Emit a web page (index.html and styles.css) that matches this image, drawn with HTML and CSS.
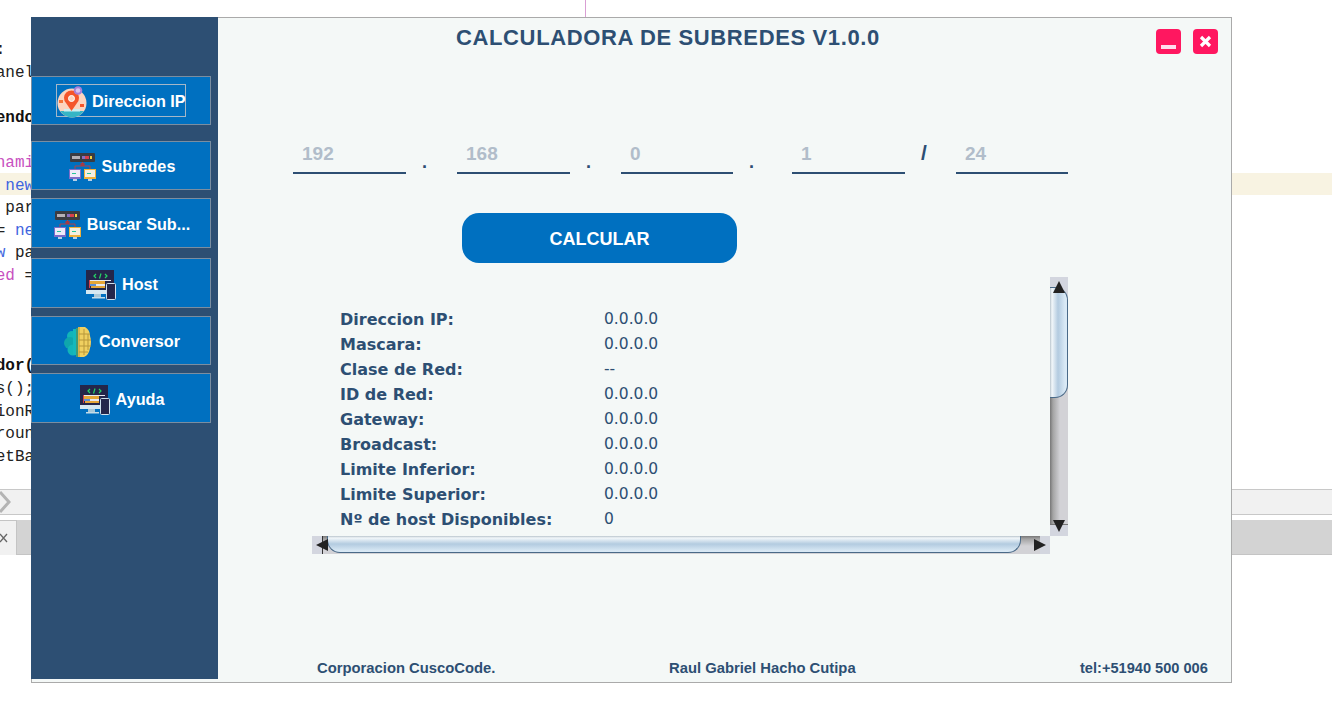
FILE: index.html
```html
<!DOCTYPE html>
<html lang="es">
<head>
    <meta charset="UTF-8">
    <title>Calculadora de Subredes</title>
    <link rel="stylesheet" href="styles.css">
</head>
<body>
    <!-- IDE visible detras de la ventana -->
    <div class="ide">
        <div class="code">
            <div class="line">:</div>
            <div class="line">anel</div>
            <div class="line"> </div>
            <div class="line bold">endo</div>
            <div class="line"> </div>
            <div class="line pink">nami</div>
            <div class="line current"> <span class="blue">new</span></div>
            <div class="line"> par</div>
            <div class="line">= <span class="blue">ne</span></div>
            <div class="line"><span class="blue">w</span> pa</div>
            <div class="line"><span class="pink">ed</span> =</div>
            <div class="line"> </div>
            <div class="line"> </div>
            <div class="line"> </div>
            <div class="line bold">dor(</div>
            <div class="line">s();</div>
            <div class="line">ionR</div>
            <div class="line">roun</div>
            <div class="line">etBa</div>
        </div>
        <div class="ide-toolbar">
            <svg class="chevron" width="12" height="22" viewBox="0 0 12 22"><path d="M1 1 L10 11 L1 21" fill="none" stroke="#b4b4b4" stroke-width="3"/></svg>
        </div>
        <div class="ide-tabs">
            <div class="ide-tab">
                <svg width="8" height="10" viewBox="0 0 8 10"><path d="M0 1 L7 9 M7 1 L0 9" stroke="#666" stroke-width="1.3"/></svg>
            </div>
        </div>
    </div>
    <div class="ide-guide"></div>

    <svg class="defs" width="0" height="0">
        <defs>
            <symbol id="icon-net" viewBox="0 0 27 28">
                <rect x="1" y="0" width="25" height="9" rx="1" fill="#3b3c42"/>
                <rect x="3" y="3" width="8" height="3" fill="#b5b0b5"/>
                <rect x="13" y="3" width="3" height="3" fill="#8a6fc0"/>
                <rect x="16" y="3" width="4" height="3" fill="#d8404a"/>
                <rect x="21" y="3" width="2" height="3" fill="#f0d040"/>
                <path d="M6 16 V13 H21 V16 M13.500 9 V13" fill="none" stroke="#b0404a" stroke-width="1"/>
                <rect x="11.500" y="10" width="4" height="3" fill="#a83a44"/>
                <rect x="0" y="16" width="12" height="10" fill="#7c6cc8"/>
                <rect x="1" y="17" width="10" height="7" fill="#eeeaf8"/>
                <rect x="3" y="20" width="4" height="1" fill="#27c59a"/>
                <rect x="4" y="26" width="4" height="2" fill="#b8d0e8"/>
                <rect x="15" y="16" width="12" height="10" fill="#efb13a"/>
                <rect x="16" y="17" width="10" height="7" fill="#f4efe0"/>
                <rect x="18" y="20" width="4" height="1" fill="#27c59a"/>
                <rect x="19" y="26" width="4" height="2" fill="#b8d0e8"/>
            </symbol>
            <symbol id="icon-host" viewBox="0 0 30 30">
                <rect x="0" y="0" width="28" height="20" fill="#24264a"/>
                <path d="M10 4 L8 6 L10 8 M19 4 L21 6 L19 8 M15 3.500 L13.500 8.500" fill="none" stroke="#25d366" stroke-width="1.200"/>
                <rect x="3" y="10" width="22" height="1" fill="#e8e8f0"/>
                <rect x="4" y="11" width="15" height="3" fill="#e6a637"/>
                <rect x="4" y="14" width="6" height="2" fill="#5c8fd8"/>
                <rect x="10" y="14" width="9" height="2" fill="#e8e8f0"/>
                <rect x="3" y="10" width="1" height="8" fill="#d8404a"/>
                <rect x="5" y="16" width="14" height="2" fill="#e6a637"/>
                <rect x="0" y="20" width="23" height="4" fill="#d4e8f2"/>
                <rect x="8" y="24" width="7" height="3" fill="#a9c8d8"/>
                <rect x="6" y="27" width="13" height="1.500" fill="#c4dce8"/>
                <rect x="20.500" y="13.500" width="9" height="16" rx="1" fill="#24264a" stroke="#cfe0ec"/>
            </symbol>
        </defs>
    </svg>

    <div class="window">
        <aside class="sidebar">
            <a class="nav-btn nav-first">
                <span class="nav-focus">
                    <svg class="nav-icon" width="30" height="32" viewBox="0 0 30 32">
                        <circle cx="15" cy="17" r="14.500" fill="#fcd4bf"/>
                        <path d="M3 25 H27 Q22 31.500 15 31.500 Q8 31.500 3 25 Z" fill="#35b5c5"/>
                        <path d="M7 23 H23 V25.500 H7 Z" fill="#cfeff0"/>
                        <path d="M14.500 25 L9 17 A7.500 7.500 0 1 1 20 17 Z" fill="#f4552a"/>
                        <circle cx="14.500" cy="12.500" r="3" fill="#fcd4bf" stroke="#fff" stroke-width="1"/>
                        <rect x="2" y="14" width="4" height="3" fill="#f4753a"/>
                        <rect x="23" y="18" width="4" height="3" fill="#f4552a"/>
                        <circle cx="21" cy="4.500" r="4.300" fill="#a87fd8"/>
                        <circle cx="21" cy="4.500" r="2.300" fill="#d8c4f0"/>
                    </svg>
                    Direccion IP
                </span>
            </a>
            <a class="nav-btn gap-16">
                <svg class="nav-icon" width="27" height="28"><use href="#icon-net"/></svg>
                Subredes
            </a>
            <a class="nav-btn gap-8 tall">
                <svg class="nav-icon" width="27" height="28"><use href="#icon-net"/></svg>
                Buscar Sub...
            </a>
            <a class="nav-btn gap-10 tall">
                <svg class="nav-icon" width="30" height="30"><use href="#icon-host"/></svg>
                Host
            </a>
            <a class="nav-btn gap-8">
                <svg class="nav-icon" width="29" height="32" viewBox="0 0 29 32">
                    <circle cx="8" cy="10" r="5" fill="#12b5b8"/>
                    <circle cx="6" cy="17" r="6" fill="#0fa6ac"/>
                    <circle cx="9" cy="24" r="5.500" fill="#12b5b8"/>
                    <rect x="9" y="3" width="6" height="26" fill="#14b8bc"/>
                    <path d="M14 1 H21 Q26 4 26 10 Q28 16 26 22 Q25 29 20 31 H14 Z" fill="#f0d060"/>
                    <path d="M15 1 V31 M20 3 V29 M24 8 V24 M15 8 H26 M15 14 H27 M15 20 H27 M15 26 H24" fill="none" stroke="#b8983a" stroke-width="1"/>
                    <rect x="12" y="2" width="2" height="29" fill="#3d9a78"/>
                </svg>
                Conversor
            </a>
            <a class="nav-btn gap-8 tall">
                <svg class="nav-icon" width="30" height="30"><use href="#icon-host"/></svg>
                Ayuda
            </a>
        </aside>

        <main class="main">
            <header class="header">
                <h1 class="title">CALCULADORA DE SUBREDES V1.0.0</h1>
                <div class="win-controls">
                    <button class="win-btn">
                        <svg width="25" height="25" viewBox="0 0 25 25"><rect x="5" y="16" width="15" height="4" fill="#fde"/></svg>
                    </button>
                    <button class="win-btn">
                        <svg width="25" height="25" viewBox="0 0 25 25"><path d="M8 8 L17 17 M17 8 L8 17" stroke="#fff" stroke-width="3.200"/></svg>
                    </button>
                </div>
            </header>

            <div class="ip-row">
                <div class="octet">192</div>
                <div class="sep">.</div>
                <div class="octet">168</div>
                <div class="sep">.</div>
                <div class="octet octet-short">0</div>
                <div class="sep sep-wide">.</div>
                <div class="octet">1</div>
                <div class="sep sep-slash">/</div>
                <div class="octet octet-short">24</div>
            </div>

            <button class="calc-btn">CALCULAR</button>

            <section class="pane">
                <div class="results">
                    <div class="result"><span class="label">Direccion IP:</span><span>0.0.0.0</span></div>
                    <div class="result"><span class="label">Mascara:</span><span>0.0.0.0</span></div>
                    <div class="result"><span class="label">Clase de Red:</span><span>--</span></div>
                    <div class="result"><span class="label">ID de Red:</span><span>0.0.0.0</span></div>
                    <div class="result"><span class="label">Gateway:</span><span>0.0.0.0</span></div>
                    <div class="result"><span class="label">Broadcast:</span><span>0.0.0.0</span></div>
                    <div class="result"><span class="label">Limite Inferior:</span><span>0.0.0.0</span></div>
                    <div class="result"><span class="label">Limite Superior:</span><span>0.0.0.0</span></div>
                    <div class="result"><span class="label">Nº de host Disponibles:</span><span>0</span></div>
                </div>
                <div class="vbar">
                    <div class="vbar-track"></div>
                    <div class="vbar-thumb"></div>
                    <svg class="arrow arrow-up" width="12" height="12" viewBox="0 0 12 12"><path d="M6 0 L12 12 H0 Z" fill="#222"/></svg>
                    <svg class="arrow arrow-down" width="12" height="12" viewBox="0 0 12 12"><path d="M6 12 L12 0 H0 Z" fill="#222"/></svg>
                </div>
                <div class="hbar">
                    <div class="hbar-track"></div>
                    <div class="hbar-thumb"></div>
                    <svg class="arrow arrow-left" width="12" height="12" viewBox="0 0 12 12"><path d="M0 6 L12 0 V12 Z" fill="#222"/></svg>
                    <svg class="arrow arrow-right" width="12" height="12" viewBox="0 0 12 12"><path d="M12 6 L0 0 V12 Z" fill="#222"/></svg>
                </div>
            </section>

            <footer class="footer">
                <span class="foot-company">Corporacion CuscoCode.</span>
                <span class="foot-author">Raul Gabriel Hacho Cutipa</span>
                <span class="foot-tel">tel:+51940 500 006</span>
            </footer>
        </main>
    </div>
</body>
</html>
```

FILE: styles.css
```css
* {
    box-sizing: border-box;
}

html, body {
    margin: 0;
    height: 702px;
    overflow: hidden;
    background: #fff;
}

body {
    position: relative;
    font-family: "Liberation Sans", Arial, sans-serif;
}

.defs {
    position: absolute;
}

/* IDE de fondo */
.code {
    padding-top: 37px;
    font: 16px/22.6px "Liberation Mono", monospace;
    color: #222;
}

.line {
    height: 22.6px;
    padding-top: 2px;
    white-space: pre;
    text-indent: -4.3px;
}

.line.current {
    background: #f8f3e2;
}

.bold {
    font-weight: bold;
    color: #111;
}

.pink {
    color: #c850c0;
}

.blue {
    color: #3f66e0;
}

.ide-toolbar {
    height: 26px;
    margin-top: 23px;
    background: #f1f1f1;
    border-top: 1px solid #c8c8c8;
    border-bottom: 1px solid #c8c8c8;
    display: flex;
    align-items: center;
}

.chevron {
    margin-left: -1px;
}

.ide-tabs {
    height: 35px;
    margin-top: 5px;
    background: #d3d3d3;
    border-bottom: 1px solid #c4c4c4;
}

.ide-tab {
    width: 17px;
    height: 35px;
    background: #f1f1f1;
    border-top: 1px solid #c4c4c4;
    border-right: 1px solid #c4c4c4;
    display: flex;
    align-items: center;
    justify-content: flex-start;
}

.ide-guide {
    position: absolute;
    left: 585px;
    top: 0;
    width: 1px;
    height: 17px;
    background: #d99fd4;
}

/* Ventana */
.window {
    position: absolute;
    left: 31px;
    top: 17px;
    width: 1201px;
    height: 666px;
    display: flex;
    align-items: flex-start;
    background: #f4f8f7;
    border: 1px solid #aaa;
}

.sidebar {
    width: 187px;
    height: 662px;
    margin: -1px 0 0 -1px;
    padding-top: 59px;
    background: #2d4f73;
    flex-shrink: 0;
}

.nav-btn {
    width: 180px;
    height: 49px;
    padding: 2px 0 0 2px;
    display: flex;
    align-items: center;
    justify-content: center;
    gap: 6px;
    background: #0070c0;
    border: 1px solid #7b8ea1;
    color: #fff;
    font-size: 16.2px;
    font-weight: bold;
    white-space: nowrap;
}

.nav-btn.tall {
    height: 50px;
    padding-top: 3px;
}

.nav-btn.nav-first {
    padding: 0;
}

.gap-8 {
    margin-top: 8px;
}

.gap-10 {
    margin-top: 10px;
}

.gap-16 {
    margin-top: 16px;
}

.nav-focus {
    width: 130px;
    height: 33px;
    padding-top: 2px;
    display: flex;
    align-items: center;
    gap: 5px;
    border: 1px solid #a5b7c8;
}

.nav-icon {
    flex-shrink: 0;
}

.main {
    flex: 1;
    height: 664px;
    display: flex;
    flex-direction: column;
    color: #2d4f73;
}

.header {
    height: 122px;
    display: flex;
    justify-content: space-between;
    align-items: flex-start;
    padding: 0 13px 0 238px;
}

.title {
    margin: 0;
    height: 39px;
    font-size: 22px;
    line-height: 39px;
    letter-spacing: 0.63px;
    font-weight: bold;
    white-space: nowrap;
}

.win-controls {
    display: flex;
    gap: 12px;
    margin-top: 11px;
}

.win-btn {
    width: 25px;
    height: 25px;
    padding: 0;
    border: none;
    border-radius: 4px;
    background: #ff1760;
    display: block;
}

.win-btn svg {
    display: block;
}

.ip-row {
    display: flex;
    height: 34px;
    padding-left: 75px;
}

.octet {
    width: 113px;
    padding: 1px 0 0 9px;
    border-bottom: 2px solid #2d4f73;
    font-size: 19px;
    font-weight: bold;
    line-height: 26px;
    color: #b1bdca;
}

.octet-short {
    width: 112px;
}

.sep {
    width: 51px;
    padding: 9px 0 0 16px;
    font-size: 18px;
    font-weight: bold;
    line-height: 26px;
}

.sep-wide {
    width: 59px;
}

.sep-slash {
    padding: 0 0 0 16px;
    font-size: 21px;
}

.calc-btn {
    width: 275px;
    height: 50px;
    margin: 39px 0 0 244px;
    padding: 2px 0 0;
    background: #0070c0;
    border: none;
    border-radius: 17px;
    color: #fff;
    font: bold 18px "Liberation Sans", Arial, sans-serif;
    flex-shrink: 0;
}

.pane {
    display: grid;
    grid-template-columns: 738px 18px;
    grid-template-rows: 259px 18px;
    width: 756px;
    margin: 14px 0 0 94px;
}

.results {
    padding: 30px 0 0 28px;
    font-family: "DejaVu Sans", Verdana, sans-serif;
    font-size: 15.5px;
    line-height: 25px;
}

.result {
    display: flex;
    height: 25px;
}

.label {
    width: 264px;
    font-size: 16px;
    font-weight: bold;
}

/* Barras de desplazamiento */
.vbar, .hbar {
    position: relative;
    background: #d3d6df;
}

.vbar {
    grid-column: 2;
    grid-row: 1;
}

.hbar {
    grid-column: 1;
    grid-row: 2;
}

.vbar-track {
    position: absolute;
    left: 0;
    right: 0;
    top: 100px;
    bottom: 11px;
    background: linear-gradient(to right, #777 0, #a4a4a4 3px, #d2d2d6 10px);
    border-bottom: 1px solid #777;
}

.vbar-thumb {
    position: absolute;
    left: 0;
    right: 0;
    top: 10px;
    height: 111px;
    border: 1px solid #4a6a88;
    border-left: none;
    border-radius: 0 13px 13px 0;
    background: linear-gradient(to right, #b8c4cc 0, #f2f7fa 2px, #b3cbe0 8px, #d9e9f5 15px);
}

.hbar-track {
    position: absolute;
    left: 10px;
    right: 10px;
    top: 0;
    bottom: 0;
    background: linear-gradient(to bottom, #777 0, #a4a4a4 3px, #d2d2d6 10px);
    border-left: 1px solid #333;
}

.hbar-thumb {
    position: absolute;
    left: 15px;
    width: 694px;
    top: 0;
    height: 17px;
    border: 1px solid #4a6a88;
    border-top: none;
    border-radius: 0 0 13px 13px;
    background: linear-gradient(to bottom, #b8c4cc 0, #f2f7fa 2px, #b3cbe0 8px, #d9e9f5 15px);
}

.arrow {
    position: absolute;
}

.arrow-up {
    left: 3px;
    top: 4px;
}

.arrow-down {
    left: 3px;
    bottom: 4px;
}

.arrow-left {
    left: 4px;
    top: 3px;
}

.arrow-right {
    right: 4px;
    top: 3px;
}

.footer {
    display: flex;
    margin-top: auto;
    padding: 0 0 5px 99px;
    font-size: 14.8px;
    font-weight: bold;
    line-height: 18px;
}

.foot-company {
    width: 352px;
}

.foot-author {
    width: 411px;
}

.foot-tel {
    font-size: 14.6px;
}
```
